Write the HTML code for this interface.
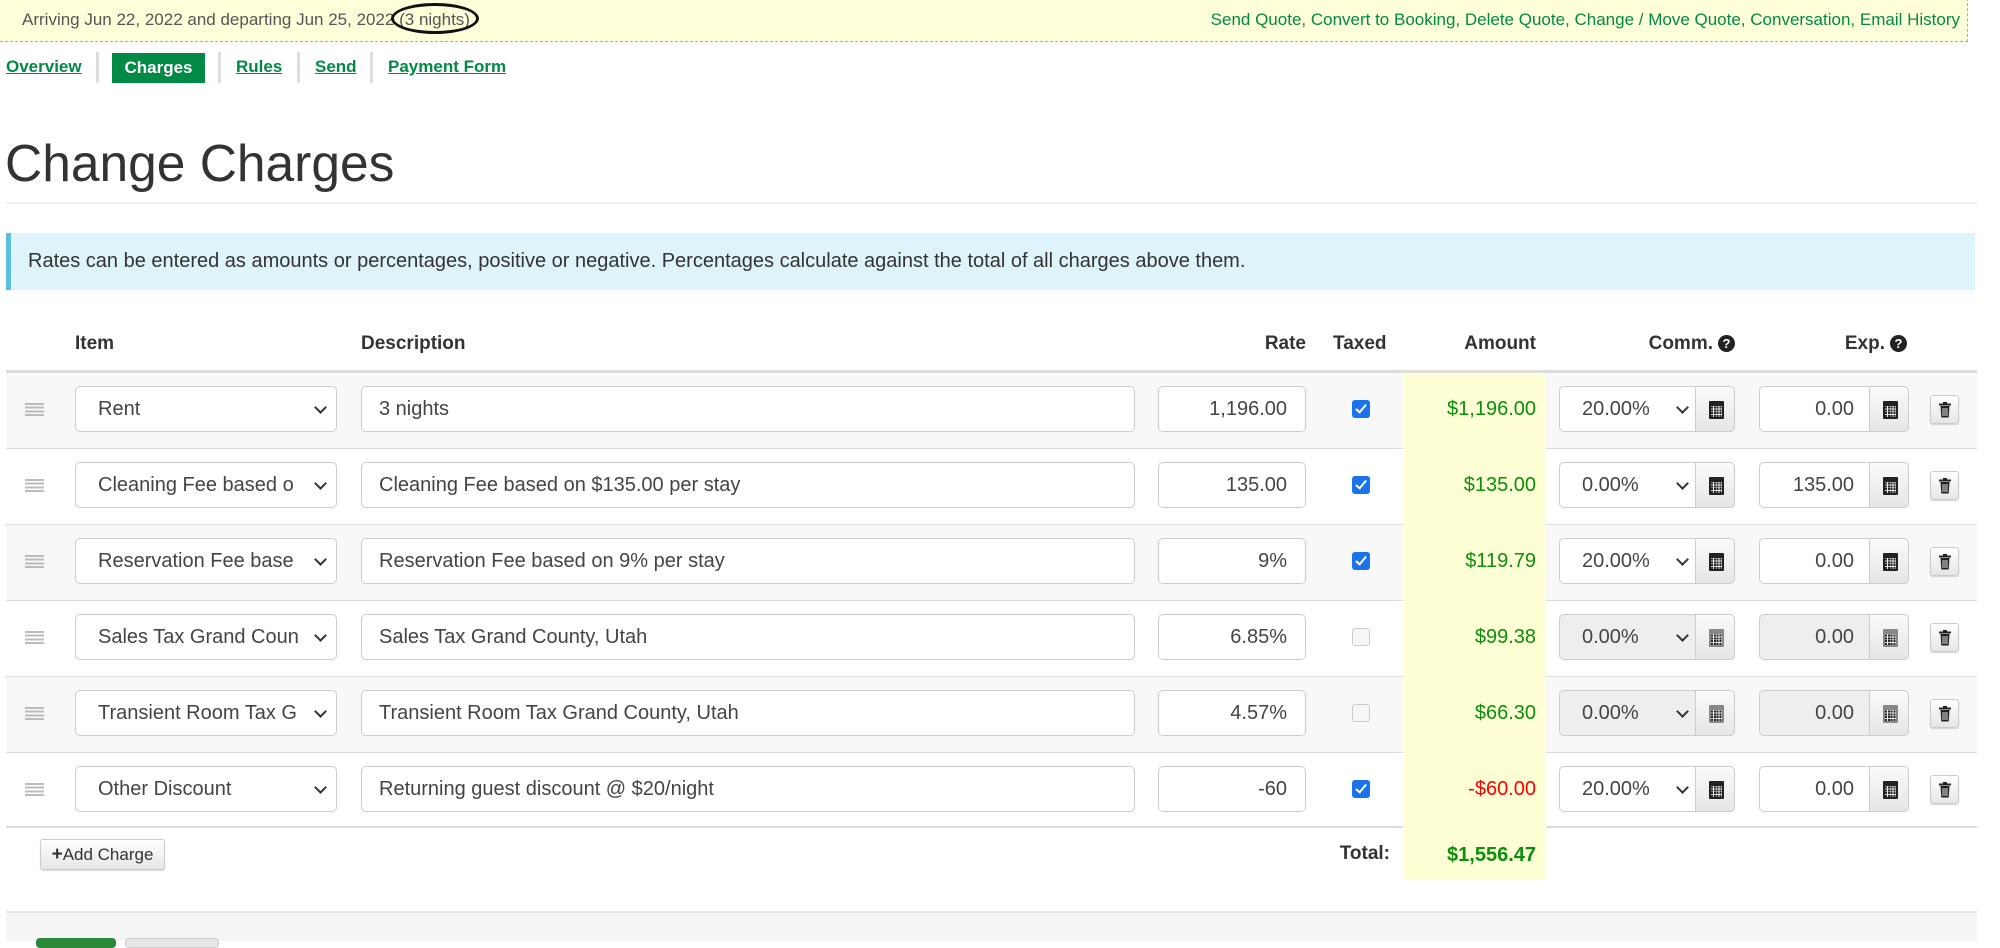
<!DOCTYPE html>
<html><head><meta charset="utf-8"><style>
*{box-sizing:border-box;margin:0;padding:0}
body{width:2000px;height:941px;overflow:hidden;background:#fff;font-family:"Liberation Sans",Arial,sans-serif;color:#333;position:relative}
.a{position:absolute}
.hdr{left:0;top:-2px;width:1968px;height:44px;background:#ffffd9;border:1px dashed #aaa;border-top:none;border-left:none}
.tab{top:57px;font-size:17px;font-weight:bold;color:#008a45;text-decoration:underline}
.sep{top:52px;width:3px;height:31px;background:#ddd}
.inp{position:absolute;height:46px;border:1px solid #ccc;border-radius:5px;background:#fff;font-size:20px;color:#444;line-height:44px;padding:0 18px 0 22px;white-space:nowrap;overflow:hidden}
.inp.r{padding:0 18px}
.desc{padding-left:17px}
.sel:after{content:"";position:absolute;right:11px;top:16px;width:7px;height:7px;border-right:2.5px solid #333;border-bottom:2.5px solid #333;transform:rotate(45deg)}
.r{text-align:right}
.dis{background:#eee}
.calc{position:absolute;height:46px;width:40px;border:1px solid #ccc;border-radius:0 5px 5px 0;background:linear-gradient(#fafafa,#e6e6e6)}
.calc i{position:absolute;left:13px;top:14px;width:15px;height:18px;background:#222;border-radius:1px}
.calc i:after{content:"";position:absolute;left:2px;top:5px;width:11px;height:11px;background:repeating-linear-gradient(90deg,transparent 0 2px,#eee 2px 2.8px),repeating-linear-gradient(0deg,#222 0 2px,#ddd 2px 2.8px)}
.calc.d i{background:#888}
.trash{position:absolute;width:29px;height:29px;border:1px solid #ccc;border-radius:3px;background:linear-gradient(#fff,#e6e6e6);box-shadow:0 1px 1px rgba(0,0,0,.15)}
.trash svg{position:absolute;left:8px;top:6px}
.cb{position:absolute;width:18px;height:18px;border-radius:3px;background:#1a73e8}
.cb:after{content:"";position:absolute;left:6px;top:2px;width:4px;height:9px;border-right:2.5px solid #fff;border-bottom:2.5px solid #fff;transform:rotate(40deg)}
.cb.u{background:#f6f6f6;border:1px solid #ccc}.cb.u:after{display:none}
.hd{position:absolute;top:333px;font-size:19px;font-weight:bold;color:#333}
.q{display:inline-block;width:17px;height:17px;border-radius:50%;background:#222;color:#fff;font-size:13px;text-align:center;line-height:17px;vertical-align:1px;margin-left:5px}
.amt{position:absolute;right:464px;font-size:20px;color:#0a8f0a}
.handle{position:absolute;left:25px;width:19px;height:13px;background:repeating-linear-gradient(#bbb 0 2px,transparent 2px 3.7px)}
</style></head><body>
<div class="a hdr"></div>
<div class="a" style="left:22px;top:10px;font-size:17px;color:#555">Arriving Jun 22, 2022 and departing Jun 25, 2022 (3 nights)</div>
<div class="a" style="left:391px;top:3px;width:88px;height:31px;border:3px solid #111;border-radius:50%"></div>
<div class="a" style="right:40px;top:10px;font-size:17px;color:#008a45">Send Quote, Convert to Booking, Delete Quote, Change / Move Quote, Conversation, Email History</div>

<div class="a tab" style="left:6px">Overview</div>
<div class="a sep" style="left:96px"></div>
<div class="a" style="left:112px;top:53px;width:93px;height:30px;background:#008a45;color:#fff;font-weight:bold;font-size:17px;text-align:center;line-height:30px">Charges</div>
<div class="a sep" style="left:218px"></div>
<div class="a tab" style="left:236px">Rules</div>
<div class="a sep" style="left:297px"></div>
<div class="a tab" style="left:315px">Send</div>
<div class="a sep" style="left:370px"></div>
<div class="a tab" style="left:388px">Payment Form</div>

<div class="a" style="left:5px;top:133px;font-size:51.5px;color:#333">Change Charges</div>
<div class="a" style="left:6px;top:202px;width:1971px;height:2px;background:#eee"></div>

<div class="a" style="left:6px;top:233px;width:1969px;height:57px;background:#dff3fa;border-left:5px solid #5bc0de;font-size:20px;color:#333;line-height:57px;padding-left:17px">Rates can be entered as amounts or percentages, positive or negative. Percentages calculate against the total of all charges above them.</div>

<div class="hd" style="left:75px">Item</div>
<div class="hd" style="left:361px">Description</div>
<div class="hd" style="right:694px">Rate</div>
<div class="hd" style="left:1333px">Taxed</div>
<div class="hd" style="right:464px">Amount</div>
<div class="hd" style="right:265px">Comm.<span class="q">?</span></div>
<div class="hd" style="right:93px">Exp.<span class="q">?</span></div>
<div class="a" style="left:6px;top:370px;width:1971px;height:3px;background:#ddd"></div>

<div class="a" style="left:6px;top:373px;width:1971px;height:75px;background:#f8f8f8"></div>
<div class="a" style="left:6px;top:525px;width:1971px;height:75px;background:#f8f8f8"></div>
<div class="a" style="left:6px;top:677px;width:1971px;height:75px;background:#f8f8f8"></div>
<div class="a" style="left:6px;top:448px;width:1971px;height:1px;background:#ddd"></div>
<div class="a" style="left:6px;top:524px;width:1971px;height:1px;background:#ddd"></div>
<div class="a" style="left:6px;top:600px;width:1971px;height:1px;background:#ddd"></div>
<div class="a" style="left:6px;top:676px;width:1971px;height:1px;background:#ddd"></div>
<div class="a" style="left:6px;top:752px;width:1971px;height:1px;background:#ddd"></div>
<div class="a" style="left:6px;top:826px;width:1971px;height:2px;background:#ddd"></div>
<div class="a" style="left:1403px;top:373px;width:143px;height:507px;background:#ffffd6"></div>

<div class="handle" style="top:403px"></div>
<div class="inp sel" style="left:75px;top:386px;width:262px">Rent</div>
<div class="inp desc" style="left:361px;top:386px;width:774px">3 nights</div>
<div class="inp r" style="left:1158px;top:386px;width:148px">1,196.00</div>
<div class="cb" style="left:1352px;top:400px"></div>
<div class="amt" style="top:398px">$1,196.00</div>
<div class="inp sel" style="left:1559px;top:386px;width:140px;border-radius:5px 0 0 5px">20.00%</div>
<div class="calc" style="left:1695px;top:386px"><i></i></div>
<div class="inp r" style="left:1759px;top:386px;width:114px;border-radius:5px 0 0 5px">0.00</div>
<div class="calc" style="left:1869px;top:386px"><i></i></div>
<div class="trash" style="left:1930px;top:395px"><svg width="12" height="16" viewBox="0 0 12 16"><rect x="0" y="1.5" width="12" height="2" fill="#222"/><rect x="4" y="0" width="4" height="2" fill="#222"/><path d="M1.5 4h9l-.8 11.5h-7.4z" fill="#222"/><path d="M4 6v8M6 6v8M8 6v8" stroke="#ddd" stroke-width="1"/></svg></div>

<div class="handle" style="top:479px"></div>
<div class="inp sel" style="left:75px;top:462px;width:262px">Cleaning Fee based o</div>
<div class="inp desc" style="left:361px;top:462px;width:774px">Cleaning Fee based on $135.00 per stay</div>
<div class="inp r" style="left:1158px;top:462px;width:148px">135.00</div>
<div class="cb" style="left:1352px;top:476px"></div>
<div class="amt" style="top:474px">$135.00</div>
<div class="inp sel" style="left:1559px;top:462px;width:140px;border-radius:5px 0 0 5px">0.00%</div>
<div class="calc" style="left:1695px;top:462px"><i></i></div>
<div class="inp r" style="left:1759px;top:462px;width:114px;border-radius:5px 0 0 5px">135.00</div>
<div class="calc" style="left:1869px;top:462px"><i></i></div>
<div class="trash" style="left:1930px;top:471px"><svg width="12" height="16" viewBox="0 0 12 16"><rect x="0" y="1.5" width="12" height="2" fill="#222"/><rect x="4" y="0" width="4" height="2" fill="#222"/><path d="M1.5 4h9l-.8 11.5h-7.4z" fill="#222"/><path d="M4 6v8M6 6v8M8 6v8" stroke="#ddd" stroke-width="1"/></svg></div>

<div class="handle" style="top:555px"></div>
<div class="inp sel" style="left:75px;top:538px;width:262px">Reservation Fee base</div>
<div class="inp desc" style="left:361px;top:538px;width:774px">Reservation Fee based on 9% per stay</div>
<div class="inp r" style="left:1158px;top:538px;width:148px">9%</div>
<div class="cb" style="left:1352px;top:552px"></div>
<div class="amt" style="top:550px">$119.79</div>
<div class="inp sel" style="left:1559px;top:538px;width:140px;border-radius:5px 0 0 5px">20.00%</div>
<div class="calc" style="left:1695px;top:538px"><i></i></div>
<div class="inp r" style="left:1759px;top:538px;width:114px;border-radius:5px 0 0 5px">0.00</div>
<div class="calc" style="left:1869px;top:538px"><i></i></div>
<div class="trash" style="left:1930px;top:547px"><svg width="12" height="16" viewBox="0 0 12 16"><rect x="0" y="1.5" width="12" height="2" fill="#222"/><rect x="4" y="0" width="4" height="2" fill="#222"/><path d="M1.5 4h9l-.8 11.5h-7.4z" fill="#222"/><path d="M4 6v8M6 6v8M8 6v8" stroke="#ddd" stroke-width="1"/></svg></div>

<div class="handle" style="top:631px"></div>
<div class="inp sel" style="left:75px;top:614px;width:262px">Sales Tax Grand Coun</div>
<div class="inp desc" style="left:361px;top:614px;width:774px">Sales Tax Grand County, Utah</div>
<div class="inp r" style="left:1158px;top:614px;width:148px">6.85%</div>
<div class="cb u" style="left:1352px;top:628px"></div>
<div class="amt" style="top:626px">$99.38</div>
<div class="inp sel dis" style="left:1559px;top:614px;width:140px;border-radius:5px 0 0 5px">0.00%</div>
<div class="calc d" style="left:1695px;top:614px"><i></i></div>
<div class="inp r dis" style="left:1759px;top:614px;width:114px;border-radius:5px 0 0 5px">0.00</div>
<div class="calc d" style="left:1869px;top:614px"><i></i></div>
<div class="trash" style="left:1930px;top:623px"><svg width="12" height="16" viewBox="0 0 12 16"><rect x="0" y="1.5" width="12" height="2" fill="#222"/><rect x="4" y="0" width="4" height="2" fill="#222"/><path d="M1.5 4h9l-.8 11.5h-7.4z" fill="#222"/><path d="M4 6v8M6 6v8M8 6v8" stroke="#ddd" stroke-width="1"/></svg></div>

<div class="handle" style="top:707px"></div>
<div class="inp sel" style="left:75px;top:690px;width:262px">Transient Room Tax G</div>
<div class="inp desc" style="left:361px;top:690px;width:774px">Transient Room Tax Grand County, Utah</div>
<div class="inp r" style="left:1158px;top:690px;width:148px">4.57%</div>
<div class="cb u" style="left:1352px;top:704px"></div>
<div class="amt" style="top:702px">$66.30</div>
<div class="inp sel dis" style="left:1559px;top:690px;width:140px;border-radius:5px 0 0 5px">0.00%</div>
<div class="calc d" style="left:1695px;top:690px"><i></i></div>
<div class="inp r dis" style="left:1759px;top:690px;width:114px;border-radius:5px 0 0 5px">0.00</div>
<div class="calc d" style="left:1869px;top:690px"><i></i></div>
<div class="trash" style="left:1930px;top:699px"><svg width="12" height="16" viewBox="0 0 12 16"><rect x="0" y="1.5" width="12" height="2" fill="#222"/><rect x="4" y="0" width="4" height="2" fill="#222"/><path d="M1.5 4h9l-.8 11.5h-7.4z" fill="#222"/><path d="M4 6v8M6 6v8M8 6v8" stroke="#ddd" stroke-width="1"/></svg></div>

<div class="handle" style="top:783px"></div>
<div class="inp sel" style="left:75px;top:766px;width:262px">Other Discount</div>
<div class="inp desc" style="left:361px;top:766px;width:774px">Returning guest discount @ $20/night</div>
<div class="inp r" style="left:1158px;top:766px;width:148px">-60</div>
<div class="cb" style="left:1352px;top:780px"></div>
<div class="amt" style="top:778px;color:#f00">-$60.00</div>
<div class="inp sel" style="left:1559px;top:766px;width:140px;border-radius:5px 0 0 5px">20.00%</div>
<div class="calc" style="left:1695px;top:766px"><i></i></div>
<div class="inp r" style="left:1759px;top:766px;width:114px;border-radius:5px 0 0 5px">0.00</div>
<div class="calc" style="left:1869px;top:766px"><i></i></div>
<div class="trash" style="left:1930px;top:775px"><svg width="12" height="16" viewBox="0 0 12 16"><rect x="0" y="1.5" width="12" height="2" fill="#222"/><rect x="4" y="0" width="4" height="2" fill="#222"/><path d="M1.5 4h9l-.8 11.5h-7.4z" fill="#222"/><path d="M4 6v8M6 6v8M8 6v8" stroke="#ddd" stroke-width="1"/></svg></div>

<div class="a" style="left:40px;top:839px;width:125px;height:31px;border:1px solid #ccc;border-radius:3px;background:linear-gradient(#fff,#e6e6e6);font-size:17px;line-height:29px;text-align:center;color:#333;box-shadow:0 1px 1px rgba(0,0,0,.15)"><b style="font-size:19px">+</b>Add Charge</div>
<div class="a" style="right:610px;top:843px;font-size:19px;font-weight:bold">Total:</div>
<div class="a" style="right:464px;top:844px;font-size:20px;font-weight:bold;color:#0a8f0a">$1,556.47</div>

<div class="a" style="left:6px;top:911px;width:1971px;height:30px;background:#f5f5f5;border-top:2px solid #e5e5e5"></div>
<div class="a" style="left:36px;top:938px;width:80px;height:10px;background:#2a8a3a;border-radius:4px"></div>
<div class="a" style="left:125px;top:938px;width:94px;height:10px;background:#e6e6e6;border:1px solid #ccc;border-radius:4px"></div>
</body></html>
